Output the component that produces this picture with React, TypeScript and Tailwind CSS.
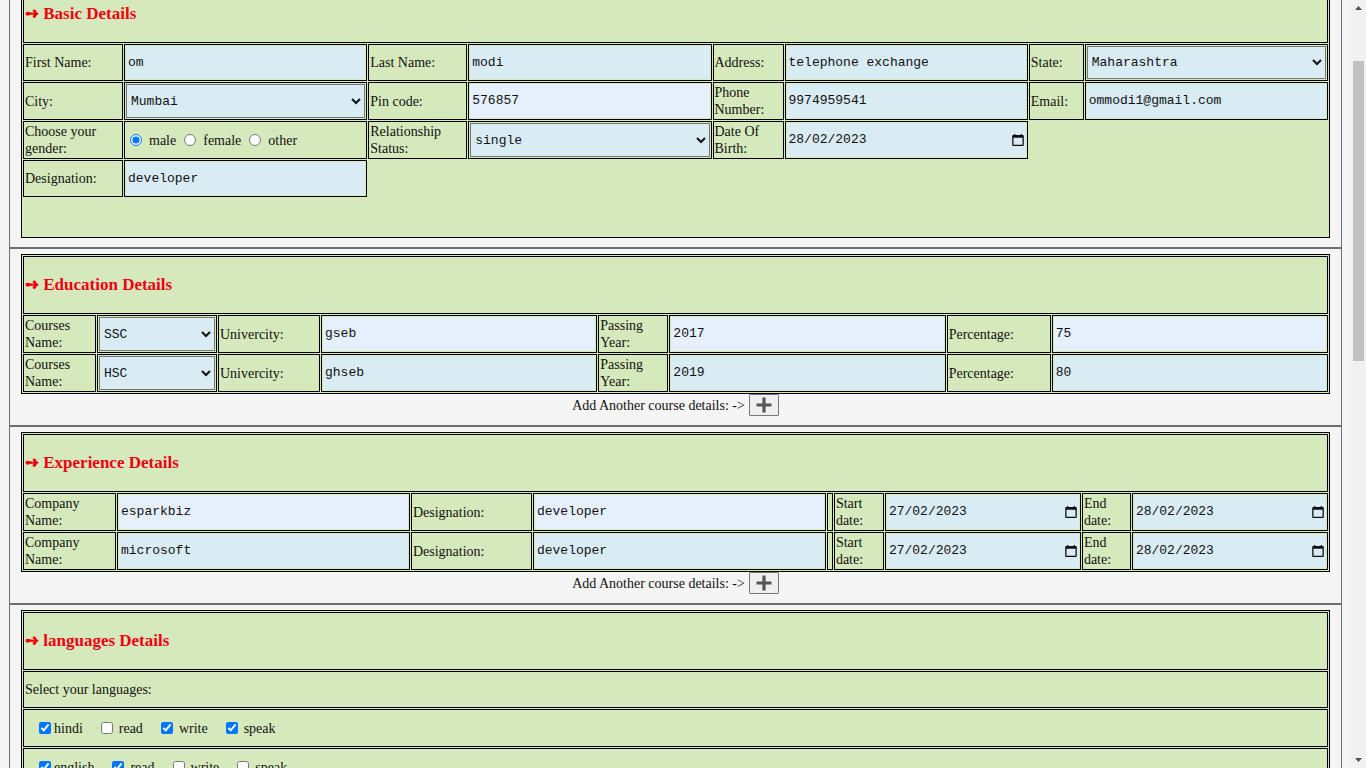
import type { ReactNode } from 'react';

const cell = 'border border-black p-px align-middle';
const control =
  'block w-full rounded-none font-["Liberation_Mono",monospace] text-[13px] leading-4 text-[#111] outline-none';

type Size = { short?: boolean };

function Label({ children, htmlFor }: { children: ReactNode; htmlFor?: string }) {
  return (
    <td className={cell}>
      <label htmlFor={htmlFor} className="block">
        {children}
      </label>
    </td>
  );
}

function TextField({ id, value, filled, short }: Size & { id: string; value: string; filled?: boolean }) {
  return (
    <td className={cell}>
      <input
        id={id}
        type="text"
        defaultValue={value}
        className={`${control} px-0.5 ${short ? 'h-[33px]' : 'h-[34px] pb-0.5'} ${filled ? 'bg-[#e6effc]' : 'bg-[#d9ebf3]'}`}
      />
    </td>
  );
}

function SelectField({ id, options, short }: Size & { id: string; options: string[] }) {
  return (
    <td className={cell}>
      <select
        id={id}
        className={`${control} border border-[#767676] bg-[#d9ebf3] ${short ? 'h-[33px]' : 'h-[34px]'}`}
      >
        {options.map((o) => (
          <option key={o}>{o}</option>
        ))}
      </select>
    </td>
  );
}

function DateField({ id, value }: { id: string; value: string }) {
  return (
    <td className={cell}>
      <div className="flex h-[34px] items-center bg-[#d9ebf3] pr-0.5">
        <input id={id} type="text" defaultValue={value} className={`${control} h-full min-w-0 flex-1 px-0.5 pb-0.5`} />
        <button type="button" aria-label="Open calendar" className="shrink-0">
          <svg width="12" height="12" viewBox="0 0 12 12" className="block">
            <path
              d="M2 0h1.300v1h5.400V0H10v1h.8a1 1 0 0 1 1 1v9a1 1 0 0 1-1 1H1.200a1 1 0 0 1-1-1V2a1 1 0 0 1 1-1H2zM1.500 3.800v6.900h9V3.800z"
              fill="#111"
              fillRule="evenodd"
            />
          </svg>
        </button>
      </div>
    </td>
  );
}

function Panel({ title, cols, children }: { title: string; cols: string[]; children: ReactNode }) {
  return (
    <table className="w-full table-fixed border-separate border-spacing-px border border-black bg-[#d6e9bc]">
      <colgroup>
        {cols.map((c, i) => (
          <col key={i} className={c} />
        ))}
      </colgroup>
      <thead>
        <tr>
          <th colSpan={cols.length} className="h-[58px] border border-black p-px text-left align-middle">
            <h3 className="text-[17px] leading-5 font-bold text-[#ee0011]">➺ {title}</h3>
          </th>
        </tr>
      </thead>
      <tbody>{children}</tbody>
    </table>
  );
}

function Section({ children, footer }: { children: ReactNode; footer?: boolean }) {
  return (
    <section className="border-b-2 border-[#6e6e6e] px-[11px] pt-[5px] pb-[9px]">
      {children}
      {footer && (
        <div className="flex h-[22px] items-center justify-center gap-1">
          <span>Add Another course details: -&gt;</span>
          <button
            type="button"
            aria-label="Add another"
            className="flex h-[22px] w-[30px] items-center justify-center rounded-[1px] border border-[#767676] bg-[#efefef]"
          >
            <svg width="16" height="16" viewBox="0 0 16 16">
              <path d="M8 .5v15M.5 8h15" stroke="#555" strokeWidth="3.200" />
            </svg>
          </button>
        </div>
      )}
    </section>
  );
}

function Languages({ items }: { items: [string, boolean][] }) {
  const [lang, ...skills] = items;
  return (
    <tr>
      <td className="h-[38px] border border-black p-px align-middle">
        <div className="flex items-center gap-[18px] pl-[14px]">
          <label className="flex items-center gap-[3px]">
            <input type="checkbox" defaultChecked={lang[1]} className="size-3" />
            {lang[0]}
          </label>
          {skills.map(([name, on]) => (
            <label key={name} className="flex items-center gap-1.5">
              <input type="checkbox" defaultChecked={on} className="size-3" />
              {name}
            </label>
          ))}
        </div>
      </td>
    </tr>
  );
}

const education = [
  { course: 'SSC', univ: 'gseb', year: '2017', pct: '75', filled: true },
  { course: 'HSC', univ: 'ghseb', year: '2019', pct: '80', filled: false },
];

const experience = [
  { company: 'esparkbiz', filled: true },
  { company: 'microsoft', filled: false },
];

export default function App() {
  return (
    <div className="flex h-screen overflow-hidden bg-[#f5f5f5] font-['Liberation_Serif',serif] text-[14px] leading-[17px] text-[#111]">
      <main className="min-w-0 flex-1 overflow-hidden px-[9px]">
        <form className="-mt-[22px] border-x border-[#6e6e6e]">
          <Section>
            <Panel
              title="Basic Details"
              cols={['w-[100px]', '', 'w-[99px]', '', 'w-[71px]', '', 'w-[55px]', '']}
            >
              <tr>
                <Label htmlFor="first">First Name:</Label>
                <TextField id="first" value="om" short />
                <Label htmlFor="last">Last Name:</Label>
                <TextField id="last" value="modi" short />
                <Label htmlFor="address">Address:</Label>
                <TextField id="address" value="telephone exchange" short />
                <Label htmlFor="state">State:</Label>
                <SelectField id="state" options={['Maharashtra', 'Gujarat']} short />
              </tr>
              <tr>
                <Label htmlFor="city">City:</Label>
                <SelectField id="city" options={['Mumbai', 'Pune']} />
                <Label htmlFor="pin">Pin code:</Label>
                <TextField id="pin" value="576857" filled />
                <Label htmlFor="phone">Phone Number:</Label>
                <TextField id="phone" value="9974959541" />
                <Label htmlFor="email">Email:</Label>
                <TextField id="email" value="ommodi1@gmail.com" />
              </tr>
              <tr>
                <td className={cell}>Choose your gender:</td>
                <td className={cell}>
                  <div className="flex items-center gap-2 pl-1">
                    {['male', 'female', 'other'].map((g) => (
                      <label key={g} className="flex items-center gap-[7px]">
                        <input type="radio" name="gender" defaultChecked={g === 'male'} className="size-3" />
                        {g}
                      </label>
                    ))}
                  </div>
                </td>
                <Label htmlFor="status">Relationship Status:</Label>
                <SelectField id="status" options={['single', 'married']} />
                <Label htmlFor="dob">Date Of Birth:</Label>
                <DateField id="dob" value="28/02/2023" />
              </tr>
              <tr>
                <Label htmlFor="designation">Designation:</Label>
                <TextField id="designation" value="developer" short />
              </tr>
              <tr>
                <td colSpan={8} className="h-[38px]" />
              </tr>
            </Panel>
          </Section>

          <Section footer>
            <Panel
              title="Education Details"
              cols={['w-[73px]', 'w-[120px]', 'w-[102px]', '', 'w-[70px]', '', 'w-[104px]', '']}
            >
              {education.map((e, i) => (
                <tr key={e.course}>
                  <Label htmlFor={`course${i}`}>Courses Name:</Label>
                  <SelectField id={`course${i}`} options={i ? ['HSC', 'SSC'] : ['SSC', 'HSC']} />
                  <Label htmlFor={`univ${i}`}>Univercity:</Label>
                  <TextField id={`univ${i}`} value={e.univ} filled={e.filled} />
                  <Label htmlFor={`year${i}`}>Passing Year:</Label>
                  <TextField id={`year${i}`} value={e.year} filled={e.filled} />
                  <Label htmlFor={`pct${i}`}>Percentage:</Label>
                  <TextField id={`pct${i}`} value={e.pct} filled={e.filled} />
                </tr>
              ))}
            </Panel>
          </Section>

          <Section footer>
            <Panel
              title="Experience Details"
              cols={['w-[93px]', '', 'w-[121px]', '', 'w-[6px]', 'w-[50px]', 'w-[196px]', 'w-[49px]', 'w-[196px]']}
            >
              {experience.map((e, i) => (
                <tr key={e.company}>
                  <Label htmlFor={`company${i}`}>Company Name:</Label>
                  <TextField id={`company${i}`} value={e.company} filled={e.filled} />
                  <Label htmlFor={`role${i}`}>Designation:</Label>
                  <TextField id={`role${i}`} value="developer" filled={e.filled} />
                  <td className={cell} />
                  <Label htmlFor={`start${i}`}>Start date:</Label>
                  <DateField id={`start${i}`} value="27/02/2023" />
                  <Label htmlFor={`end${i}`}>End date:</Label>
                  <DateField id={`end${i}`} value="28/02/2023" />
                </tr>
              ))}
            </Panel>
          </Section>

          <Section>
            <Panel title="languages Details" cols={['']}>
              <tr>
                <td className="h-[37px] border border-black p-px align-middle">Select your languages:</td>
              </tr>
              <Languages items={[['hindi', true], ['read', false], ['write', true], ['speak', true]]} />
              <Languages items={[['english', true], ['read', true], ['write', false], ['speak', false]]} />
            </Panel>
          </Section>
        </form>
      </main>
      <div aria-hidden="true" className="flex w-[15px] shrink-0 flex-col items-center bg-[#f1f1f1]">
        <svg width="15" height="15" viewBox="0 0 15 15" className="shrink-0">
          <path d="M4 10h7L7.5 6z" fill="#505050" />
        </svg>
        <div className="h-[6%] shrink-0" />
        <div className="h-[300px] w-[11px] bg-[#c1c1c1]" />
        <div className="flex-1" />
        <svg width="15" height="15" viewBox="0 0 15 15" className="shrink-0">
          <path d="M4 5h7l-3.500 4z" fill="#505050" />
        </svg>
      </div>
    </div>
  );
}
